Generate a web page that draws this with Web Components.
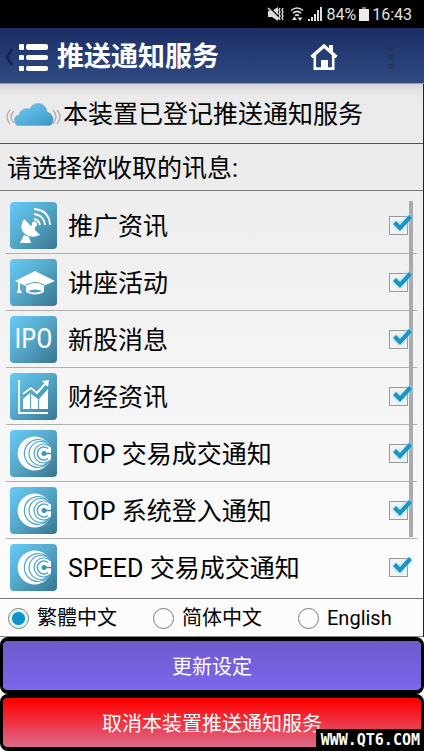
<!DOCTYPE html>
<html lang="zh-Hans">
<head>
<meta charset="utf-8">
<meta name="viewport" content="width=device-width, initial-scale=1">
<title>推送通知服务</title>
<style>
body { margin: 0; background: #000; color: #000; font-family: Roboto, "Noto Sans CJK SC", sans-serif; }
</style>
</head>
<body>
<push-app></push-app>
<script>
const define = (name, html, setup) => {
  const template = document.createElement('template');
  template.innerHTML = html;
  customElements.define(name, class extends HTMLElement {
    constructor() {
      super();
      this.attachShadow({ mode: 'open' }).append(template.content.cloneNode(true));
    }
    connectedCallback() {
      if (setup && !this.ready) { this.ready = true; setup(this, this.shadowRoot); }
    }
  });
};

define('status-bar', `
<style>
:host { display: flex; align-items: center; justify-content: flex-end; gap: 3px; height: 28px; padding-right: 12px; background: #000; color: #e2e2e2; font-size: 16px; }
svg { display: block; }
</style>
<svg width="20" height="16" viewBox="0 0 20 16" fill="none" stroke="#dedede" stroke-width="1.6" role="img" aria-label="静音">
  <path d="M1 5h4l6-4v14l-6-4H1z" fill="#dedede" stroke="none"/>
  <path d="M2 1l11 11" stroke="#000" stroke-width="1.5"/><path d="M1 2l11 11"/>
  <path d="M13 2l-1 2 1 2-1 2 1 2-1 2 1 2M16 2l-1 2 1 2-1 2 1 2-1 2 1 2" stroke-width="1.4"/>
</svg>
<svg width="14" height="16" viewBox="0 0 14 16" fill="none" stroke="#dedede" stroke-width="1.6" role="img" aria-label="无线网络">
  <path d="M1 4.500q6-5 12 0M3 7.200q4-3.500 8 0M5 9.700q2-1.800 4 0"/>
  <path d="M2 14l2.500-3.500L7 14zM7.500 11.500h5L10 15z" fill="#dedede" stroke="none"/>
</svg>
<svg width="16" height="16" viewBox="0 0 16 16" fill="#dedede" role="img" aria-label="信号">
  <path d="M1 13h2v2H1zM4 11h2v4H4zM7 8h2v7H7zM10 4h2v11h-2zM13 1h2v14h-2z"/>
</svg>
<span>84%</span>
<svg width="10" height="16" viewBox="0 0 10 16" role="img" aria-label="电池"><path d="M0 3h10v12H0z" fill="#ececec"/><path d="M3 1h4v2H3z" fill="#777"/></svg>
<span>16:43</span>
`);

define('app-header', `
<style>
:host { display: flex; align-items: center; height: 55px; border-bottom: 1px solid #909bb7; background: linear-gradient(#1b2e65, #304a82); color: #fff; }
h1 { flex: 1; margin: 0; padding-top: 2px; font-size: 27px; line-height: 40px; font-weight: 700; white-space: nowrap; }
button { display: block; margin: 0; padding: 0; border: 0; background: none; }
svg { display: block; }
.home { padding: 2px 12px 0; margin-right: 25px; }
.more { padding: 2px 13px 0; margin-right: 17px; }
.menu { padding: 2px 9px 0 4px; }
</style>
<button class="menu" aria-label="菜单"><svg width="44" height="30" viewBox="0 0 44 30">
  <path d="M8 7L3 15l5 8" fill="none" stroke="#16234b" stroke-width="2.5"/>
  <g fill="#fff"><rect x="15" y="2" width="5" height="6" rx="1"/><rect x="15" y="13" width="5" height="5" rx="1"/><rect x="15" y="24" width="5" height="5" rx="1"/>
  <rect x="22" y="2" width="22" height="6" rx="2"/><rect x="22" y="13" width="22" height="5" rx="2"/><rect x="22" y="24" width="22" height="5" rx="2"/></g>
</svg></button>
<h1><slot></slot></h1>
<button class="home" aria-label="主页"><svg width="28" height="28" viewBox="0 0 28 28" fill="none" stroke="#fff">
  <path d="M1.500 14L14 3l12.500 11" stroke-width="3.400"/><path d="M4.800 12v13.600h18.400V12" stroke-width="2.600"/>
  <path d="M19 2h4v8l-4-4zM11 17h7v9h-7z" fill="#fff" stroke="none"/>
</svg></button>
<button class="more" aria-label="更多"><svg width="6" height="26" viewBox="0 0 6 26" fill="#27365f"><path d="M0 2h6v5H0zM0 11h6v5H0zM0 20h6v5H0z"/></svg></button>
`);

define('device-status', `
<style>
:host { display: flex; align-items: center; gap: 2px; box-sizing: border-box; height: 60px; padding: 2px 0 0 6px; border-bottom: 1px solid #5a3fae; background: linear-gradient(#d4d4d6, #e4e4e4 6px, #ebebeb 14px); font-size: 25px; white-space: nowrap; }
svg { display: block; flex: none; }
p { margin: 0; line-height: 36px; }
</style>
<svg width="55" height="24" viewBox="0 0 55 24" role="img" aria-label="云">
  <defs><linearGradient id="c" x2="1" y2="1"><stop offset="0" stop-color="#6fcbf7"/><stop offset="1" stop-color="#3b96c2"/></linearGradient></defs>
  <g fill="none" stroke="#aeaeae" stroke-width="1.300"><path d="M4 7q-6 7 0 14M8 8q-6 6 0 12M47 7q6 6 0 14M51 7q6 6 0 14"/></g>
  <path d="M11 22.500Q8 20 8.500 16q1-4 5-4 0-5 5-6 3-1 5 0Q27 0 33 .5q7 1 8 8 5 2 6 6 1 6-3 8z" fill="url(#c)" stroke="#8aabbb" stroke-width=".6"/>
</svg>
<p><slot></slot></p>
`);

define('section-title', `
<style>
:host { display: block; padding: 7px 7px 3px; border-bottom: 1px solid #777; background: #ececec; }
h2 { margin: 0; font-size: 25px; line-height: 36px; font-weight: 400; }
</style>
<h2><slot></slot></h2>
`);

const icons = {
  dish: `<g fill="#fff"><path d="M14 17q-6 9 1 15 6 5 15 1z"/><path d="M14 33l5 2 2 6H10z"/><circle cx="24.500" cy="22" r="2.600"/><path d="M20 25l4-4 2 2-2 6z"/></g>
    <g fill="none" stroke="#fff" stroke-width="1.800"><path d="M24 17q5 1 6 6M24 12q10 1 11 11M24 7q15 1 16 16"/></g>`,
  cap: `<g fill="#fff"><path d="M5 22L25 12l20 10-12 5q-8-5-17 0z"/><path d="M16 25q9-5 18 0v8q-9 5-18 0z"/><path d="M8 23h2v7l2 4H7l1-4z"/></g><path d="M18 32q7-3 14 0-7 3-14 0z" fill="#4f9dbb"/><path d="M16 26q9-5 18 0" fill="none" stroke="#4f9dbb" stroke-width="1.200"/>`,
  chart: `<path d="M9 7v33h29" fill="none" stroke="#fff" stroke-width="1.800"/>
    <g fill="#fff"><path d="M13 26l7-6v16h-7zM21 21l7 5v10h-7zM29 26l9-10v20h-9z"/></g>
    <path d="M13 22l8-7 7 6 9-11" fill="none" stroke="#4f9dbb" stroke-width="4"/><path d="M13 21l8-6 6 5 9-10" fill="none" stroke="#fff" stroke-width="2"/><path d="M32 8l7-1-1 7z" fill="#fff"/>`,
  rings: `<path d="M38 13A17 17 0 1 0 38 34l3-5V18z" fill="#fff"/>
    <g fill="none" stroke="#4ea6ca" stroke-width="1.200"><path d="M37 12.500A14 14 0 1 0 37 34.500M39 14.500A12 12 0 1 0 39 32.500M40 16.500A9.500 9.500 0 1 0 40 30.500"/><path d="M38 18.500a6.500 6.500 0 1 0 0 10" stroke-width="1.500"/></g>
    <circle cx="34" cy="23.500" r="2.500" fill="#4292b2"/><path d="M34 23.500h7" stroke="#4292b2" stroke-width="1.500"/>`
};

define('tile-icon', `
<style>
:host { display: grid; place-items: center; flex: none; width: 47px; height: 47px; border-radius: 4px; overflow: hidden; background: linear-gradient(135deg, #66cbf8, #56aacb 45%, #39758f); color: #fff; font-family: "Roboto Condensed", "Liberation Sans Narrow", "Open Sans Condensed", Roboto, sans-serif; font-size: 27px; line-height: 47px; }
svg { display: block; }
</style>
`, (host, root) => {
  const kind = host.getAttribute('kind');
  const box = document.createElement('template');
  box.innerHTML = kind === 'ipo' ? '<span>IPO</span>' : `<svg width="47" height="47" viewBox="0 0 47 47" aria-hidden="true">${icons[kind]}</svg>`;
  root.append(box.content);
});

define('notice-row', `
<style>
:host { display: block; border-bottom: 1px solid #b0b0b0; }
:host(:last-of-type) { border-bottom-color: transparent; }
label { display: flex; align-items: center; height: 56px; padding: 0 9px 0 4px; }
.text { flex: 1; padding: 3px 0 0 11px; font-size: 25px; line-height: 36px; white-space: nowrap; }
.check { position: relative; width: 19px; height: 19px; }
input { appearance: none; display: block; width: 19px; height: 19px; margin: 0; border: 1px solid #999; background: #f4f4f4; }
svg { position: absolute; left: 0; top: -4px; display: none; overflow: visible; pointer-events: none; filter: drop-shadow(0 0 2px #8fdcf5); }
input:checked + svg { display: block; }
</style>
<label><span class="text"><slot></slot></span>
<span class="check"><input type="checkbox" checked><svg width="24" height="24" viewBox="0 0 24 24"><path d="M4 12l3-3 4 4L20 3l3 3-12 13z" fill="#1b94bf"/></svg></span></label>
`, (host, root) => {
  const tile = document.createElement('tile-icon');
  tile.setAttribute('kind', host.getAttribute('kind'));
  root.querySelector('label').prepend(tile);
});

define('notice-list', `
<style>
:host { display: block; position: relative; flex: 1; padding: 6px 6px 1px; border-bottom: 1px solid #777; background: linear-gradient(#eee, #fcfcfc); }
.bar { position: absolute; right: 10px; top: 10px; bottom: 61px; width: 4px; background: #aaa; }
</style>
<div class="bar"></div><slot></slot>
`);

define('language-picker', `
<style>
:host { display: block; border-bottom: 1px solid #888; background: #fcfcfc; }
fieldset { display: grid; grid-template-columns: repeat(3, 1fr); gap: 20px; margin: 0; padding: 0 0 0 8px; border: 0; height: 37px; }
label { display: flex; align-items: center; gap: 8px; padding-top: 1px; font-size: 20px; line-height: 28px; white-space: nowrap; }
input { appearance: none; flex: none; width: 21px; height: 21px; margin: 0; border: 1px solid #777; border-radius: 50%; background: #fcfcfc; }
input:checked { background: radial-gradient(circle, #0d94c4 6px, #cdeef8 7px, #f1fbfe 9px); }
</style>
<fieldset aria-label="语言">
<label><input type="radio" name="lang" checked>繁體中文</label>
<label><input type="radio" name="lang">简体中文</label>
<label><input type="radio" name="lang">English</label>
</fieldset>
`);

define('action-button', `
<style>
:host { display: block; }
button { display: block; width: 100%; height: 57px; margin: 0; padding: 2px 0 0; border: 3px solid #000; border-width: 4px 3px; border-radius: 8px; color: #fff; font: inherit; font-size: 20px; line-height: 28px; background: linear-gradient(#6c5bcb, #7c66ec) padding-box; }
:host([danger]) button { background: linear-gradient(#f00 5%, #dc6b8c) padding-box; }
</style>
<button><slot></slot></button>
`);

define('site-mark', `
<style>
:host { display: block; position: absolute; right: 0; bottom: 0; padding: 0 4px 0 5px; background: #000; color: #fff; font: bold 15px/22px "DejaVu Sans Mono", monospace; }
</style>
<slot></slot>
`);

define('push-app', `
<style>
:host { display: flex; flex-direction: column; position: relative; min-height: 100vh; }
main { display: flex; flex-direction: column; flex: 1; border-right: 1px solid #222; }
footer { background: #fafafa; }
</style>
<status-bar></status-bar>
<app-header>推送通知服务</app-header>
<main>
<device-status>本装置已登记推送通知服务</device-status>
<section-title>请选择欲收取的讯息:</section-title>
<notice-list>
<notice-row kind="dish">推广资讯</notice-row>
<notice-row kind="cap">讲座活动</notice-row>
<notice-row kind="ipo">新股消息</notice-row>
<notice-row kind="chart">财经资讯</notice-row>
<notice-row kind="rings">TOP 交易成交通知</notice-row>
<notice-row kind="rings">TOP 系统登入通知</notice-row>
<notice-row kind="rings">SPEED 交易成交通知</notice-row>
</notice-list>
<language-picker></language-picker>
</main>
<footer>
<action-button>更新设定</action-button>
<action-button danger>取消本装置推送通知服务</action-button>
</footer>
<site-mark>WWW.QT6.COM</site-mark>
`);
</script>
</body>
</html>
